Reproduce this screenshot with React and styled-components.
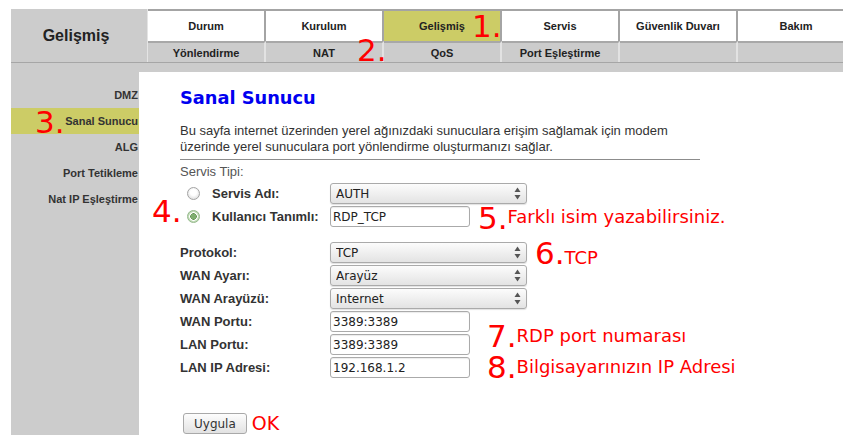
import React from "react";
import styled, { createGlobalStyle } from "styled-components";

const GlobalStyle = createGlobalStyle`
  html, body {
    margin: 0;
    padding: 0;
    background: #fff;
  }
  body {
    font-family: "Liberation Sans", Arial, sans-serif;
  }
`;

const Page = styled.div`
  position: relative;
  width: 843px;
  height: 435px;
  overflow: hidden;
  padding: 9px 0 0 11px;
  box-sizing: border-box;
  display: flex;
  flex-direction: column;
`;

/* ---------- header ---------- */

const Header = styled.header`
  display: flex;
  height: 54px;
  flex-shrink: 0;
  border-bottom: 1px solid #a6a6a6;
  box-sizing: border-box;
`;

const TitleCell = styled.div`
  width: 137px;
  flex-shrink: 0;
  background: #cccccc;
  border-right: 1px solid #e4e4e4;
  display: flex;
  align-items: center;
  justify-content: center;
  font-weight: 700;
  font-size: 16px;
  color: #222;
  padding-right: 6px;
  box-sizing: border-box;
`;

const Tabs = styled.nav`
  display: grid;
  grid-template-columns: repeat(6, 118px);
  grid-template-rows: 32px 21px;
`;

const Tab = styled.div`
  background: ${(p) => (p.$active ? "#cccc66" : "#ffffff")};
  border-top: 2px solid #a4a4a4;
  border-right: 2px solid #a4a4a4;
  display: flex;
  align-items: center;
  justify-content: center;
  font-size: 11px;
  font-weight: 700;
  color: #222;
  box-sizing: border-box;
`;

const SubTab = styled.div`
  background: #cccccc;
  border-top: 2px solid #a8a8a8;
  border-right: 2px solid #e2e2e2;
  display: flex;
  align-items: center;
  justify-content: center;
  font-size: 11px;
  font-weight: 700;
  color: #222;
  box-sizing: border-box;
`;

/* ---------- body ---------- */

const Body = styled.div`
  flex: 1;
  display: flex;
  background: #cccccc;
`;

const Sidebar = styled.aside`
  width: 128px;
  flex-shrink: 0;
  padding-top: 19px;
  display: flex;
  flex-direction: column;
`;

const SideItem = styled.div`
  height: 26px;
  display: flex;
  align-items: center;
  justify-content: flex-end;
  padding-right: 1px;
  font-size: 11px;
  font-weight: 700;
  color: #333;
  white-space: nowrap;
  background: ${(p) => (p.$active ? "#cccc66" : "transparent")};
`;

const PanelWrap = styled.main`
  flex: 1;
  padding-top: 9px;
  display: flex;
`;

const Panel = styled.section`
  flex: 1;
  background: #fff;
  padding: 15px 0 0 41px;
`;

const Title = styled.h1`
  margin: 0;
  font-family: "DejaVu Sans", sans-serif;
  font-size: 17.8px;
  line-height: 22px;
  font-weight: 700;
  color: #0000f0;
`;

const Intro = styled.p`
  margin: 14px 0 0;
  font-size: 13px;
  line-height: 16px;
  color: #333;
  white-space: nowrap;
`;

const Rule = styled.hr`
  width: 520px;
  margin: 4px 0 0;
  border: 0;
  border-top: 1px solid #8c8c8c;
`;

const Caption = styled.div`
  margin-top: 4px;
  font-size: 13px;
  line-height: 16px;
  color: #555;
`;

const FieldGroup = styled.div`
  display: flex;
  flex-direction: column;
  gap: 2px;
  margin-top: ${(p) => p.$gap || 0}px;
`;

const Row = styled.div`
  display: grid;
  grid-template-columns: 150px auto;
  align-items: center;
  height: 21px;
`;

const Label = styled.label`
  display: flex;
  align-items: center;
  gap: 12px;
  padding-left: ${(p) => (p.$radio ? 7 : 0)}px;
  font-size: 13px;
  font-weight: 700;
  color: #333;
  white-space: nowrap;
`;

const Radio = styled.span`
  width: 13px;
  height: 13px;
  border-radius: 50%;
  box-sizing: border-box;
  border: 1px solid ${(p) => (p.$checked ? "#93b88a" : "#a3a3a3")};
  background: ${(p) =>
    p.$checked
      ? "radial-gradient(circle, #7fae70 0 2.6px, #5f9150 3px, #ffffff 3.5px 4px, #c3dcb9 4.6px)"
      : "radial-gradient(circle at 50% 40%, #ffffff 0 3px, #e6e6e6 6px)"};
`;

const SelectBox = styled.div`
  position: relative;
  width: 197px;
  height: 21px;
`;

const NativeSelect = styled.select`
  appearance: none;
  width: 100%;
  height: 100%;
  margin: 0;
  border: 1px solid #aaaaaa;
  border-radius: 3px;
  background: linear-gradient(#fcfcfc, #e3e3e3);
  box-shadow: 0 1px 1px rgba(0, 0, 0, 0.12);
  font-family: "DejaVu Sans", sans-serif;
  font-size: 12px;
  color: #222;
  padding: 0 20px 0 5px;
  outline: none;
`;

const Arrows = styled.svg`
  position: absolute;
  right: 6px;
  top: 3px;
  pointer-events: none;
`;

const TextInput = styled.input`
  width: 140px;
  height: 21px;
  box-sizing: border-box;
  margin: 0;
  border: 1px solid #aaaaaa;
  border-radius: 3px;
  box-shadow: inset 0 1px 1px rgba(0, 0, 0, 0.08);
  padding: 0 2px;
  font-family: "DejaVu Sans", sans-serif;
  font-size: 12px;
  color: #222;
  outline: none;
`;

const Actions = styled.div`
  display: flex;
  align-items: center;
  gap: 5px;
  margin: 35px 0 0 3px;
`;

const Button = styled.button`
  height: 21px;
  padding: 0 10px;
  border: 1px solid #a9a9a9;
  border-radius: 3px;
  background: linear-gradient(#fdfdfd, #e2e2e2);
  font-family: "DejaVu Sans", sans-serif;
  font-size: 12px;
  color: #333;
`;

const RedText = styled.span`
  font-family: "DejaVu Sans", sans-serif;
  font-size: ${(p) => p.$size || 18}px;
  line-height: 1;
  color: #ff0000;
  vertical-align: ${(p) => p.$raise || 0}px;
`;

/* annotation overlays drawn on top of the screenshot */
const Note = styled.div`
  position: absolute;
  left: ${(p) => p.$x}px;
  top: ${(p) => p.$y}px;
  font-family: "DejaVu Sans", sans-serif;
  font-size: 31px;
  line-height: 26px;
  color: #ff0000;
  white-space: nowrap;
`;

const tabs = ["Durum", "Kurulum", "Gelişmiş", "Servis", "Güvenlik Duvarı", "Bakım"];
const subTabs = ["Yönlendirme", "NAT", "QoS", "Port Eşleştirme", "", ""];
const sideItems = ["DMZ", "Sanal Sunucu", "ALG", "Port Tetikleme", "Nat IP Eşleştirme"];

const Select = ({ value }) => (
  <SelectBox>
    <NativeSelect defaultValue={value}>
      <option>{value}</option>
    </NativeSelect>
    <Arrows width="7" height="15" viewBox="0 0 7 15">
      <polygon points="0.5,6 3.5,1.5 6.5,6" fill="#555" />
      <polygon points="0.5,9 6.5,9 3.5,13.5" fill="#555" />
    </Arrows>
  </SelectBox>
);

const Field = ({ label, children }) => (
  <Row>
    <Label>{label}</Label>
    {children}
  </Row>
);

const App = () => {
  return (
    <>
      <GlobalStyle />
      <Page>
        <Header>
          <TitleCell>Gelişmiş</TitleCell>
          <Tabs>
            {tabs.map((t) => (
              <Tab key={t} $active={t === "Gelişmiş"}>
                {t}
              </Tab>
            ))}
            {subTabs.map((t, i) => (
              <SubTab key={i}>{t}</SubTab>
            ))}
          </Tabs>
        </Header>

        <Body>
          <Sidebar>
            {sideItems.map((s) => (
              <SideItem key={s} $active={s === "Sanal Sunucu"}>
                {s}
              </SideItem>
            ))}
          </Sidebar>

          <PanelWrap>
            <Panel>
              <Title>Sanal Sunucu</Title>
              <Intro>
                Bu sayfa internet üzerinden yerel ağınızdaki sunuculara erişim sağlamak için modem
                <br />
                üzerinde yerel sunuculara port yönlendirme oluşturmanızı sağlar.
              </Intro>
              <Rule />
              <Caption>Servis Tipi:</Caption>

              <FieldGroup $gap={3}>
                <Row>
                  <Label $radio>
                    <Radio />
                    Servis Adı:
                  </Label>
                  <Select value="AUTH" />
                </Row>
                <Row>
                  <Label $radio>
                    <Radio $checked />
                    Kullanıcı Tanımlı:
                  </Label>
                  <TextInput defaultValue="RDP_TCP" />
                </Row>
              </FieldGroup>

              <FieldGroup $gap={15}>
                <Field label="Protokol:">
                  <Select value="TCP" />
                </Field>
                <Field label="WAN Ayarı:">
                  <Select value="Arayüz" />
                </Field>
                <Field label="WAN Arayüzü:">
                  <Select value="Internet" />
                </Field>
                <Field label="WAN Portu:">
                  <TextInput defaultValue="3389:3389" />
                </Field>
                <Field label="LAN Portu:">
                  <TextInput defaultValue="3389:3389" />
                </Field>
                <Field label="LAN IP Adresi:">
                  <TextInput defaultValue="192.168.1.2" />
                </Field>
              </FieldGroup>

              <Actions>
                <Button>Uygula</Button>
                <RedText $size={19}>OK</RedText>
              </Actions>
            </Panel>
          </PanelWrap>
        </Body>

        <Note $x={472} $y={13}>1.</Note>
        <Note $x={357} $y={37}>2.</Note>
        <Note $x={35} $y={109}>3.</Note>
        <Note $x={152} $y={198}>4.</Note>
        <Note $x={478} $y={205}>
          5.<RedText $raise={6}>Farklı isim yazabilirsiniz.</RedText>
        </Note>
        <Note $x={535} $y={240}>
          6.<RedText>TCP</RedText>
        </Note>
        <Note $x={487} $y={323}>
          7.<RedText $raise={5}>RDP port numarası</RedText>
        </Note>
        <Note $x={487} $y={354}>
          8.<RedText $raise={5}>Bilgisayarınızın IP Adresi</RedText>
        </Note>
      </Page>
    </>
  );
};

export default App;
